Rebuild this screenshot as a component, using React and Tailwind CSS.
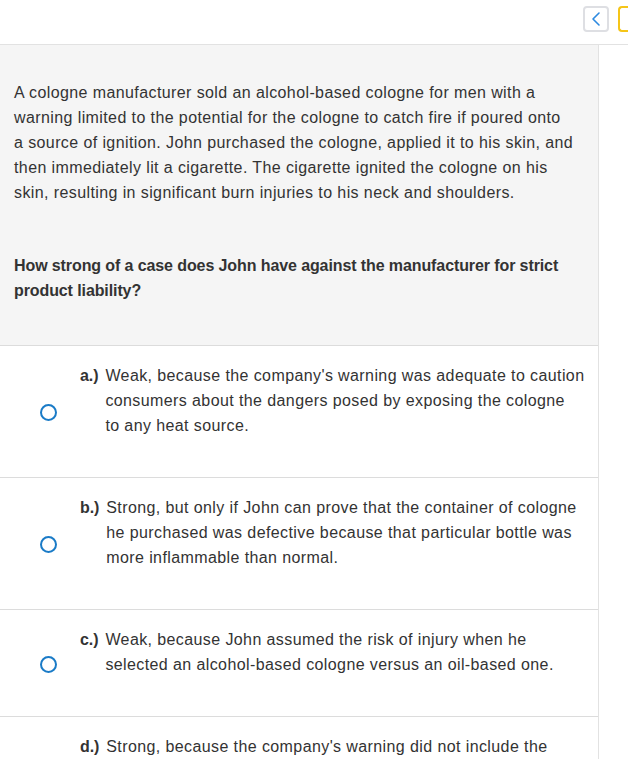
import React from "react";

const STEM = [
  "A cologne manufacturer sold an alcohol-based cologne for men with a",
  "warning limited to the potential for the cologne to catch fire if poured onto",
  "a source of ignition. John purchased the cologne, applied it to his skin, and",
  "then immediately lit a cigarette. The cigarette ignited the cologne on his",
  "skin, resulting in significant burn injuries to his neck and shoulders.",
];

const PROMPT = [
  "How strong of a case does John have against the manufacturer for strict",
  "product liability?",
];

const OPTIONS = [
  {
    label: "a.)",
    lines: [
      "Weak, because the company's warning was adequate to caution",
      "consumers about the dangers posed by exposing the cologne",
      "to any heat source.",
    ],
  },
  {
    label: "b.)",
    lines: [
      "Strong, but only if John can prove that the container of cologne",
      "he purchased was defective because that particular bottle was",
      "more inflammable than normal.",
    ],
  },
  {
    label: "c.)",
    lines: [
      "Weak, because John assumed the risk of injury when he",
      "selected an alcohol-based cologne versus an oil-based one.",
    ],
  },
  {
    label: "d.)",
    lines: [
      "Strong, because the company's warning did not include the",
      "danger of the cologne catching fire from a lit cigarette on",
      "the skin.",
    ],
  },
];

function Lines({ lines }) {
  return lines.map((l) => (
    <span key={l} className="block">{l}</span>
  ));
}

function Option({ label, lines }) {
  return (
    <div className="flex items-center border-b border-[#dcdcdc] pt-[17px] pb-[39px]">
      <div className="w-[80px] shrink-0 flex justify-center pl-[32px] pr-[16px] self-stretch items-center">
        <span className="block w-[17px] h-[17px] rounded-full border-2 border-[#1a7bc7] translate-y-[12px]"></span>
      </div>
      <div className="flex gap-[7px] pr-[8px]">
        <span className="font-bold shrink-0 tracking-[-0.1px]">{label}</span>
        <p className="whitespace-nowrap">
          <Lines lines={lines} />
        </p>
      </div>
    </div>
  );
}

export default function App() {
  return (
    <div className="w-[628px] h-[759px] overflow-hidden bg-white text-[16px] leading-[25px] tracking-[0.4px] text-[#333333] font-['Liberation_Sans','Arial',sans-serif]">
      {/* Header */}
      <div className="h-[45px] border-b border-[#e2e2e2] flex items-start justify-end pt-[6px] gap-[9px] pr-0">
        <button className="w-[26px] h-[26px] rounded-[4px] border-2 border-[#dedfe3] flex items-center justify-center">
          <svg width="12" height="16" viewBox="0 0 12 16" fill="none">
            <path d="M9 2 L3 8 L9 14" stroke="#2d8ae0" strokeWidth="1.6" strokeLinecap="round" strokeLinejoin="round" />
          </svg>
        </button>
        <div className="w-[10px] h-[26px] rounded-l-[4px] border-2 border-r-0 border-[#f5c518]"></div>
      </div>

      <div className="flex">
        <div className="w-[599px] border-r border-[#e2e2e2]">
          {/* Question */}
          <div className="bg-[#f5f5f5] border-b border-[#dcdcdc] px-[14px] pt-[35px] pb-[42px] whitespace-nowrap">
            <p>
              <Lines lines={STEM} />
            </p>
            <p className="font-bold mt-[48px] tracking-[-0.1px]">
              <Lines lines={PROMPT} />
            </p>
          </div>

          {/* Options */}
          {OPTIONS.map((o) => (
            <Option key={o.label} label={o.label} lines={o.lines} />
          ))}
        </div>
      </div>
    </div>
  );
}
